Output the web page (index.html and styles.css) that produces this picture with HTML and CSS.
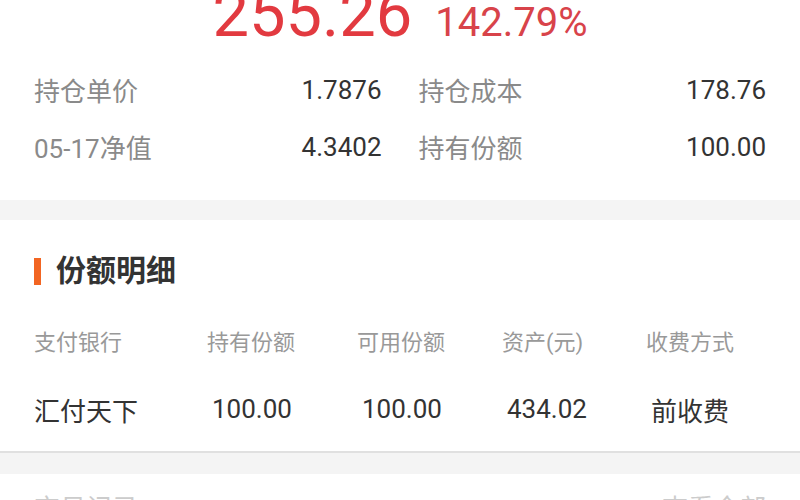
FILE: index.html
```html
<!DOCTYPE html>
<html lang="zh-CN">
<head>
    <meta charset="UTF-8">
    <meta name="viewport" content="width=device-width, initial-scale=1.0">
    <title>持仓详情</title>
    <link rel="stylesheet" href="styles.css">
</head>
<body>
    <section class="card summary">
        <div class="profit">
            <span class="profit-amount">255.26</span>
            <span class="profit-rate">142.79%</span>
        </div>
        <div class="stats">
            <div class="stat"><span class="stat-label">持仓单价</span><span class="stat-value">1.7876</span></div>
            <div class="stat"><span class="stat-label">持仓成本</span><span class="stat-value">178.76</span></div>
            <div class="stat"><span class="stat-label">05-17净值</span><span class="stat-value">4.3402</span></div>
            <div class="stat"><span class="stat-label">持有份额</span><span class="stat-value">100.00</span></div>
        </div>
    </section>

    <div class="gap"></div>

    <section class="card shares">
        <h2 class="section-title">份额明细</h2>
        <div class="share-row share-head">
            <span>支付银行</span>
            <span>持有份额</span>
            <span>可用份额</span>
            <span>资产(元)</span>
            <span>收费方式</span>
        </div>
        <div class="share-row share-data">
            <span>汇付天下</span>
            <span>100.00</span>
            <span>100.00</span>
            <span>434.02</span>
            <span>前收费</span>
        </div>
    </section>

    <div class="gap gap-lined"></div>

    <section class="card records">
        <div class="record-row">
            <span>交易记录</span>
            <span>查看全部</span>
        </div>
    </section>
</body>
</html>
```

FILE: styles.css
```css
body {
    margin: 0;
    background: #fff;
    font-family: Roboto, "Noto Sans CJK SC", sans-serif;
    color: #333;
    overflow: hidden;
}
.card {
    background: #fff;
    padding: 0 34px;
}
.gap {
    height: 20px;
    background: #f4f4f4;
}
.gap-lined {
    height: 21px;
    border-top: 2px solid #e0e0e0;
}

/* profit header */
.summary {
    margin-top: -18px;
    padding-bottom: 25px;
}
.profit {
    display: flex;
    justify-content: center;
    align-items: baseline;
    gap: 23px;
    color: #e23a40;
    line-height: 1;
}
.profit-amount {
    font-size: 65px;
}
.profit-rate {
    font-size: 40px;
    color: #d8434a;
}
.stats {
    display: grid;
    grid-template-columns: 1fr 1fr;
    column-gap: 37px;
    margin-top: 14px;
}
.stat {
    display: flex;
    justify-content: space-between;
    align-items: center;
    height: 57px;
    font-size: 26px;
}
.stat-label {
    color: #8a8a8a;
}
.stat-value {
    color: #333;
}

/* shares table */
.shares {
    padding-top: 36px;
}
.section-title {
    display: flex;
    align-items: center;
    margin: 0;
    font-size: 30px;
    line-height: 30px;
    font-weight: bold;
    color: #333;
}
.section-title::before {
    content: "";
    width: 7px;
    height: 27px;
    margin-right: 15px;
    background: #f26522;
}
.share-row {
    display: grid;
    grid-template-columns: 173px 150px 145px 144px 1fr;
    align-items: center;
}
.share-head {
    margin-top: 38px;
    height: 30px;
    font-size: 22px;
    color: #999;
}
.share-data {
    margin-top: 13px;
    height: 84px;
    font-size: 26px;
    color: #333;
}
.share-data span + span {
    padding-left: 5px;
}

/* records */
.records {
    padding-top: 14px;
}
.record-row {
    display: flex;
    justify-content: space-between;
    font-size: 26px;
    color: #ccc;
}
```
